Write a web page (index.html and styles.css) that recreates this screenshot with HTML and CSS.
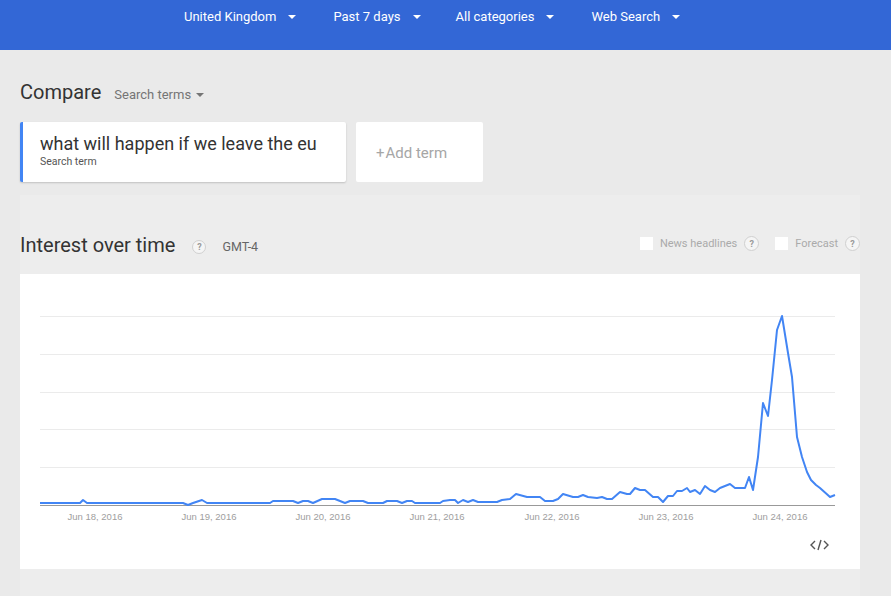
FILE: index.html
```html
<!DOCTYPE html>
<html>
<head>
<meta charset="utf-8">
<link rel="stylesheet" href="styles.css">
</head>
<body>
<header class="topbar">
  <div class="pick">United Kingdom<span class="caret"></span></div>
  <div class="pick">Past 7 days<span class="caret"></span></div>
  <div class="pick">All categories<span class="caret"></span></div>
  <div class="pick">Web Search<span class="caret"></span></div>
</header>
<main class="main">
  <div class="compare-row">
    <h1 class="compare">Compare</h1>
    <div class="mode">Search terms<span class="caret dark"></span></div>
  </div>
  <div class="terms">
    <div class="term-card">
      <div class="term">what will happen if we leave the eu</div>
      <div class="term-sub">Search term</div>
    </div>
    <div class="add-card"><span class="plus">+</span>Add term</div>
  </div>
  <section class="panel">
    <div class="panel-head">
      <h2 class="title">Interest over time</h2>
      <span class="help">?</span>
      <span class="tz">GMT-4</span>
      <div class="opts">
        <span class="box"></span><span class="opt">News headlines</span><span class="help">?</span>
        <span class="box box2"></span><span class="opt">Forecast</span><span class="help">?</span>
      </div>
    </div>
    <div class="chart-card">
      <svg class="chart" width="840" height="295" viewBox="20 274 840 295">
        <g class="grid">
          <line x1="40" y1="316.5" x2="835" y2="316.5"/>
          <line x1="40" y1="354.5" x2="835" y2="354.5"/>
          <line x1="40" y1="392.5" x2="835" y2="392.5"/>
          <line x1="40" y1="429.5" x2="835" y2="429.5"/>
          <line x1="40" y1="467.5" x2="835" y2="467.5"/>
        </g>
        <line class="axis" x1="40" y1="505.5" x2="835" y2="505.5"/>
        <polyline class="series" points="40,503 80,503 83,500 87,503 183,503 188,505 193,503 202,500 207,503 270,503 273,501 293,501 298,503 303,501 308,501 313,503 322,499 335,499 345,503 350,501 363,501 368,503 383,503 387,501 397,501 402,503 407,501 412,501 415,503 440,503 443,501 450,500 455,500 458,503 463,500 468,502 473,500 478,502 497,502 502,500 510,499 516,494 527,497 540,497 545,501 553,501 558,499 563,494 573,497 578,497 583,495 588,497 597,498 602,497 607,499 612,499 620,492 627,494 630,494 635,488 640,490 645,490 653,497 658,497 663,502 668,496 673,496 677,491 682,491 687,488 690,492 695,490 700,494 705,486 710,490 715,492 720,488 730,484 735,488 745,488 749,477 753,490 758,457 763,403 768,416 772,380 777,330 782,316 788,353 792,377 797,437 802,457 807,472 811,480 816,485 820,488 830,497 835,495"/>
        <g class="xlabels">
          <text x="95" y="520">Jun 18, 2016</text>
          <text x="209" y="520">Jun 19, 2016</text>
          <text x="323" y="520">Jun 20, 2016</text>
          <text x="437" y="520">Jun 21, 2016</text>
          <text x="552" y="520">Jun 22, 2016</text>
          <text x="666" y="520">Jun 23, 2016</text>
          <text x="780" y="520">Jun 24, 2016</text>
        </g>
        <g class="embed">
          <polyline points="815,541 811,545 815,549"/>
          <line x1="821" y1="540" x2="818" y2="550"/>
          <polyline points="824,541 828,545 824,549"/>
        </g>
      </svg>
    </div>
  </section>
</main>
</body>
</html>
```
FILE: styles.css
```css
* { box-sizing: border-box; }
html, body { margin: 0; padding: 0; }
body {
  background: #eaeaea;
  font-family: Roboto, "Liberation Sans", Arial, sans-serif;
  width: 891px;
  height: 596px;
  overflow: hidden;
}
.topbar {
  height: 50px;
  background: #3367d6;
  display: flex;
  align-items: flex-start;
  padding: 8px 0 0 184px;
}
.pick {
  color: #fff;
  font-size: 13px;
  line-height: 17px;
  display: flex;
  align-items: center;
}
.pick + .pick { margin-left: 37px; }
.pick:nth-child(3) { margin-left: 35px; }
.caret {
  display: inline-block;
  width: 0; height: 0;
  border-left: 4px solid transparent;
  border-right: 4px solid transparent;
  border-top: 4px solid #fff;
  margin-left: 12px;
  margin-top: 1px;
}
.caret.dark { border-top-color: #757575; margin-left: 5px; }
.main { padding: 0 0 0 20px; }
.compare-row {
  display: flex;
  align-items: center;
  height: 30px;
  margin-top: 27px;
}
.compare {
  margin: 0;
  font-size: 20px;
  font-weight: 400;
  color: #333;
}
.mode {
  margin-left: 13px;
  margin-top: 5px;
  font-size: 13px;
  color: #757575;
  display: flex;
  align-items: center;
}
.terms {
  display: flex;
  gap: 10px;
  margin-top: 15px;
}
.term-card {
  width: 326px;
  height: 60px;
  background: #fff;
  border-left: 3px solid #4285f4;
  border-radius: 2px;
  box-shadow: 0 1px 2px rgba(0,0,0,0.18);
  padding: 10px 0 0 17px;
}
.term {
  font-size: 18px;
  color: #333;
  line-height: 23px;
}
.term-sub {
  font-size: 10.5px;
  color: #555;
  line-height: 13px;
}
.add-card {
  width: 127px;
  height: 60px;
  background: #fff;
  border-radius: 2px;
  color: #a6a6a6;
  font-size: 15px;
  padding: 22px 0 0 20px;
  line-height: 19px;
}
.plus { margin-right: 1px; }
.panel {
  margin-top: 13px;
  width: 840px;
  height: 401px;
  background: #ededed;
}
.panel-head {
  height: 79px;
  display: flex;
  align-items: center;
  padding-top: 20px;
}
.title {
  margin: 0;
  font-size: 20px;
  font-weight: 400;
  color: #333;
}
.help {
  display: inline-flex;
  align-items: center;
  justify-content: center;
  width: 14px; height: 14px;
  border-radius: 50%;
  border: 1px solid #d0d0d0;
  background: #f5f5f5;
  color: #9a9a9a;
  font-size: 9px;
  font-weight: 700;
}
.title + .help { margin-left: 17px; margin-top: 4px; }
.tz {
  margin-left: 16px;
  margin-top: 4px;
  font-size: 12.5px;
  color: #666;
}
.opts {
  margin-left: auto;
  display: flex;
  align-items: center;
  margin-right: 0;
  margin-top: -2px;
}
.box {
  width: 13px; height: 13px;
  background: #fff;
  margin-right: 7px;
}
.box2 { margin-left: 16px; }
.opt {
  font-size: 11px;
  color: #aaa;
  margin-right: 7px;
}
.opts .help { width: 15px; height: 15px; }
.chart-card {
  width: 840px;
  height: 295px;
  background: #fff;
}
.chart { display: block; }
.grid line { stroke: #ebebeb; stroke-width: 1; }
.axis { stroke: #999; stroke-width: 1; }
.series {
  fill: none;
  stroke: #4285f4;
  stroke-width: 2;
  stroke-linejoin: round;
}
.xlabels text {
  font-family: "Liberation Sans", Arial, sans-serif;
  font-size: 9.5px;
  fill: #9e9e9e;
  text-anchor: middle;
}
.embed polyline, .embed line {
  fill: none;
  stroke: #555;
  stroke-width: 1.4;
}
```
